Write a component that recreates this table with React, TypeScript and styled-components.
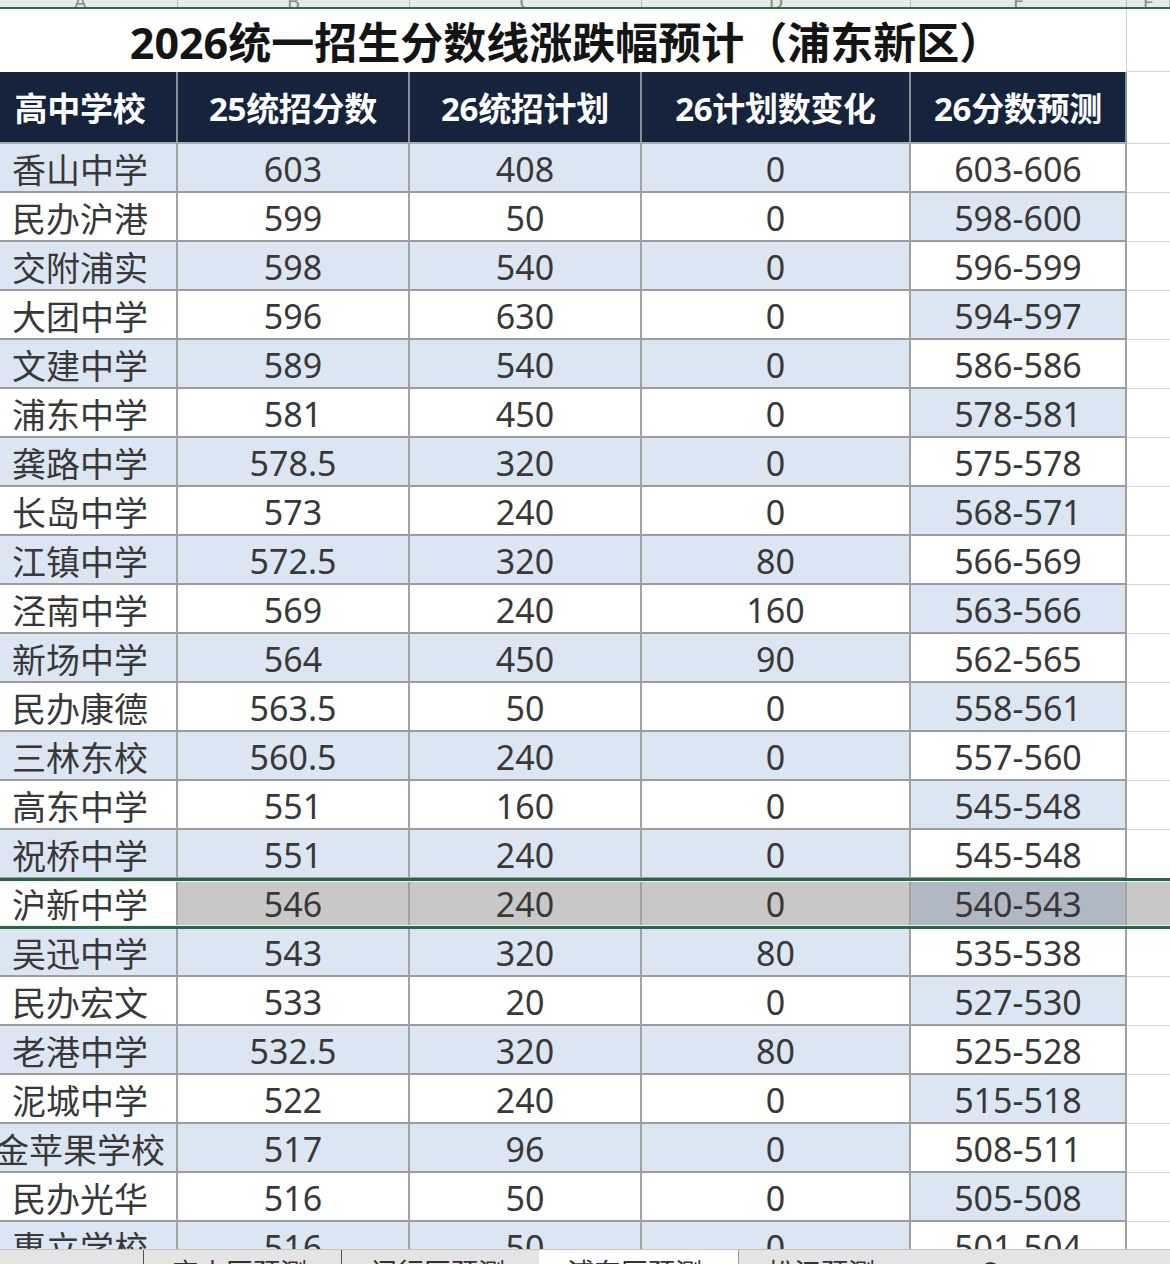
import React from "react";
import styled, { createGlobalStyle } from "styled-components";

const GlobalStyle = createGlobalStyle`
  html, body { margin: 0; padding: 0; background: #ffffff; overflow: hidden; }
  body { font-family: "Noto Sans", "Noto Sans CJK SC", sans-serif; }
`;

const COLS = "194px 232px 232px 269px 216px 43px";

const Screen = styled.div`
  width: 1170px;
  height: 1264px;
  display: flex;
  flex-direction: column;
  overflow: hidden;
  background: #fff;
`;

const Sheet = styled.div`
  flex: 1;
  min-height: 0;
  margin-left: -16px;
  width: 1186px;
  display: flex;
  flex-direction: column;
  overflow: hidden;
`;

const LetterStrip = styled.div`
  display: grid;
  flex: none;
  grid-template-columns: ${COLS};
  height: 7px;
  background: #e8e8e8;
  overflow: hidden;
`;

const Letter = styled.div`
  display: flex;
  align-items: flex-end;
  justify-content: center;
  overflow: hidden;
  border-right: 1px solid #bcbcbc;
  font-size: 20px;
  line-height: 1;
  color: #8a8a8a;
  span { display: block; margin-bottom: -5px; }
`;

const GreenRule = styled.div`
  flex: none;
  height: 2px;
  background: #2c6b48;
`;

const Row = styled.div<{ $h: number; $selected?: boolean }>`
  position: relative;
  display: grid;
  grid-template-columns: ${COLS};
  grid-template-rows: ${(p) => p.$h}px;
  height: ${(p) => p.$h}px;
  flex: none;
  ${(p) =>
    p.$selected
      ? `
    &::before, &::after {
      content: "";
      position: absolute;
      left: 0; right: 0;
      height: 3px;
      background: #2a6646;
      z-index: 2;
    }
    &::before { top: -1px; box-shadow: 0 1px 0 #e8f3ec; }
    &::after { bottom: -1px; box-shadow: 0 -1px 0 #e8f3ec; }
  `
      : ""}
`;

const TitleCell = styled.div`
  grid-column: 1 / span 5;
  display: flex;
  align-items: center;
  justify-content: center;
  padding-left: 22px;
  font-family: "Noto Sans", "Noto Sans CJK SC", sans-serif;
  font-weight: 700;
  font-size: 43px;
  color: #141414;
  white-space: nowrap;
  border-right: 1px solid #d0d0d0;
`;

const SpareCell = styled.div<{ $bg?: string }>`
  box-sizing: border-box;
  background: ${(p) => p.$bg || "#ffffff"};
  border-bottom: 1px solid #d6d6d6;
`;

const HeadCell = styled.div`
  box-sizing: border-box;
  display: flex;
  align-items: center;
  justify-content: center;
  background: #15233d;
  color: #ffffff;
  font-weight: 700;
  font-size: 33px;
  letter-spacing: -0.3px;
  white-space: nowrap;
  border-right: 2px solid #8a909a;
  border-bottom: 2px solid #a9adb3;
`;

const Cell = styled.div<{ $bg: string }>`
  box-sizing: border-box;
  display: flex;
  align-items: center;
  justify-content: center;
  padding-top: 2px;
  background: ${(p) => p.$bg};
  color: #383838;
  font-size: 34px;
  white-space: nowrap;
  border-right: 2px solid #a2a2a2;
  border-bottom: 2px solid #9c9c9c;
`;

const TabBar = styled.div`
  height: 14px;
  flex: none;
  display: flex;
  background: #e4e4e4;
  border-top: 1px solid #c4c4c4;
  overflow: hidden;
`;

const Tab = styled.div<{ $w: number; $active?: boolean; $sep?: boolean }>`
  width: ${(p) => p.$w}px;
  flex: none;
  box-sizing: border-box;
  padding-top: 7px;
  padding-left: 28px;
  font-size: 27px;
  line-height: 1.2;
  color: #333;
  white-space: nowrap;
  background: ${(p) => (p.$active ? "#ffffff" : "transparent")};
  border-left: ${(p) => (p.$sep ? "1px solid #555" : "none")};
  border-right: ${(p) => (p.$active ? "1px solid #9a9a9a" : "none")};
`;

const BLUE = "#dce6f2";
const WHITE = "#ffffff";
const GRAY = "#c8c8c8";
const GRAYBLUE = "#b2b8c1";

type R = [string, string, string, string, string];
const data: R[] = [
  ["香山中学", "603", "408", "0", "603-606"],
  ["民办沪港", "599", "50", "0", "598-600"],
  ["交附浦实", "598", "540", "0", "596-599"],
  ["大团中学", "596", "630", "0", "594-597"],
  ["文建中学", "589", "540", "0", "586-586"],
  ["浦东中学", "581", "450", "0", "578-581"],
  ["龚路中学", "578.5", "320", "0", "575-578"],
  ["长岛中学", "573", "240", "0", "568-571"],
  ["江镇中学", "572.5", "320", "80", "566-569"],
  ["泾南中学", "569", "240", "160", "563-566"],
  ["新场中学", "564", "450", "90", "562-565"],
  ["民办康德", "563.5", "50", "0", "558-561"],
  ["三林东校", "560.5", "240", "0", "557-560"],
  ["高东中学", "551", "160", "0", "545-548"],
  ["祝桥中学", "551", "240", "0", "545-548"],
  ["沪新中学", "546", "240", "0", "540-543"],
  ["吴迅中学", "543", "320", "80", "535-538"],
  ["民办宏文", "533", "20", "0", "527-530"],
  ["老港中学", "532.5", "320", "80", "525-528"],
  ["泥城中学", "522", "240", "0", "515-518"],
  ["金苹果学校", "517", "96", "0", "508-511"],
  ["民办光华", "516", "50", "0", "505-508"],
  ["惠立学校", "516", "50", "0", "501-504"],
];

const SELECTED = 15;

const headers = ["高中学校", "25统招分数", "26统招计划", "26计划数变化", "26分数预测"];

export default function App() {
  return (
    <Screen>
      <GlobalStyle />
      <Sheet>
        <LetterStrip>
          {["A", "B", "C", "D", "E", "F"].map((l) => (
            <Letter key={l}>
              <span>{l}</span>
            </Letter>
          ))}
        </LetterStrip>
        <GreenRule />
        <Row $h={63}>
          <TitleCell>2026统一招生分数线涨跌幅预计（浦东新区）</TitleCell>
          <SpareCell />
        </Row>
        <Row $h={72}>
          {headers.map((h) => (
            <HeadCell key={h}>{h}</HeadCell>
          ))}
          <SpareCell />
        </Row>
        {data.map((r, i) => {
          const sel = i === SELECTED;
          const even = i % 2 === 0;
          const mainBg = even ? BLUE : WHITE;
          const lastBg = even ? WHITE : BLUE;
          return (
            <Row key={i} $h={49} $selected={sel}>
              <Cell $bg={sel ? WHITE : mainBg}>{r[0]}</Cell>
              <Cell $bg={sel ? GRAY : mainBg}>{r[1]}</Cell>
              <Cell $bg={sel ? GRAY : mainBg}>{r[2]}</Cell>
              <Cell $bg={sel ? GRAY : mainBg}>{r[3]}</Cell>
              <Cell $bg={sel ? GRAYBLUE : lastBg}>{r[4]}</Cell>
              <SpareCell $bg={sel ? GRAY : WHITE} />
            </Row>
          );
        })}
      </Sheet>
      <TabBar>
        <Tab $w={143} />
        <Tab $w={198} $sep>宝山区预测</Tab>
        <Tab $w={198} $sep>闵行区预测</Tab>
        <Tab $w={200} $active>浦东区预测</Tab>
        <Tab $w={210}>松江预测</Tab>
        <Tab $w={221}>⊕</Tab>
      </TabBar>
    </Screen>
  );
}
